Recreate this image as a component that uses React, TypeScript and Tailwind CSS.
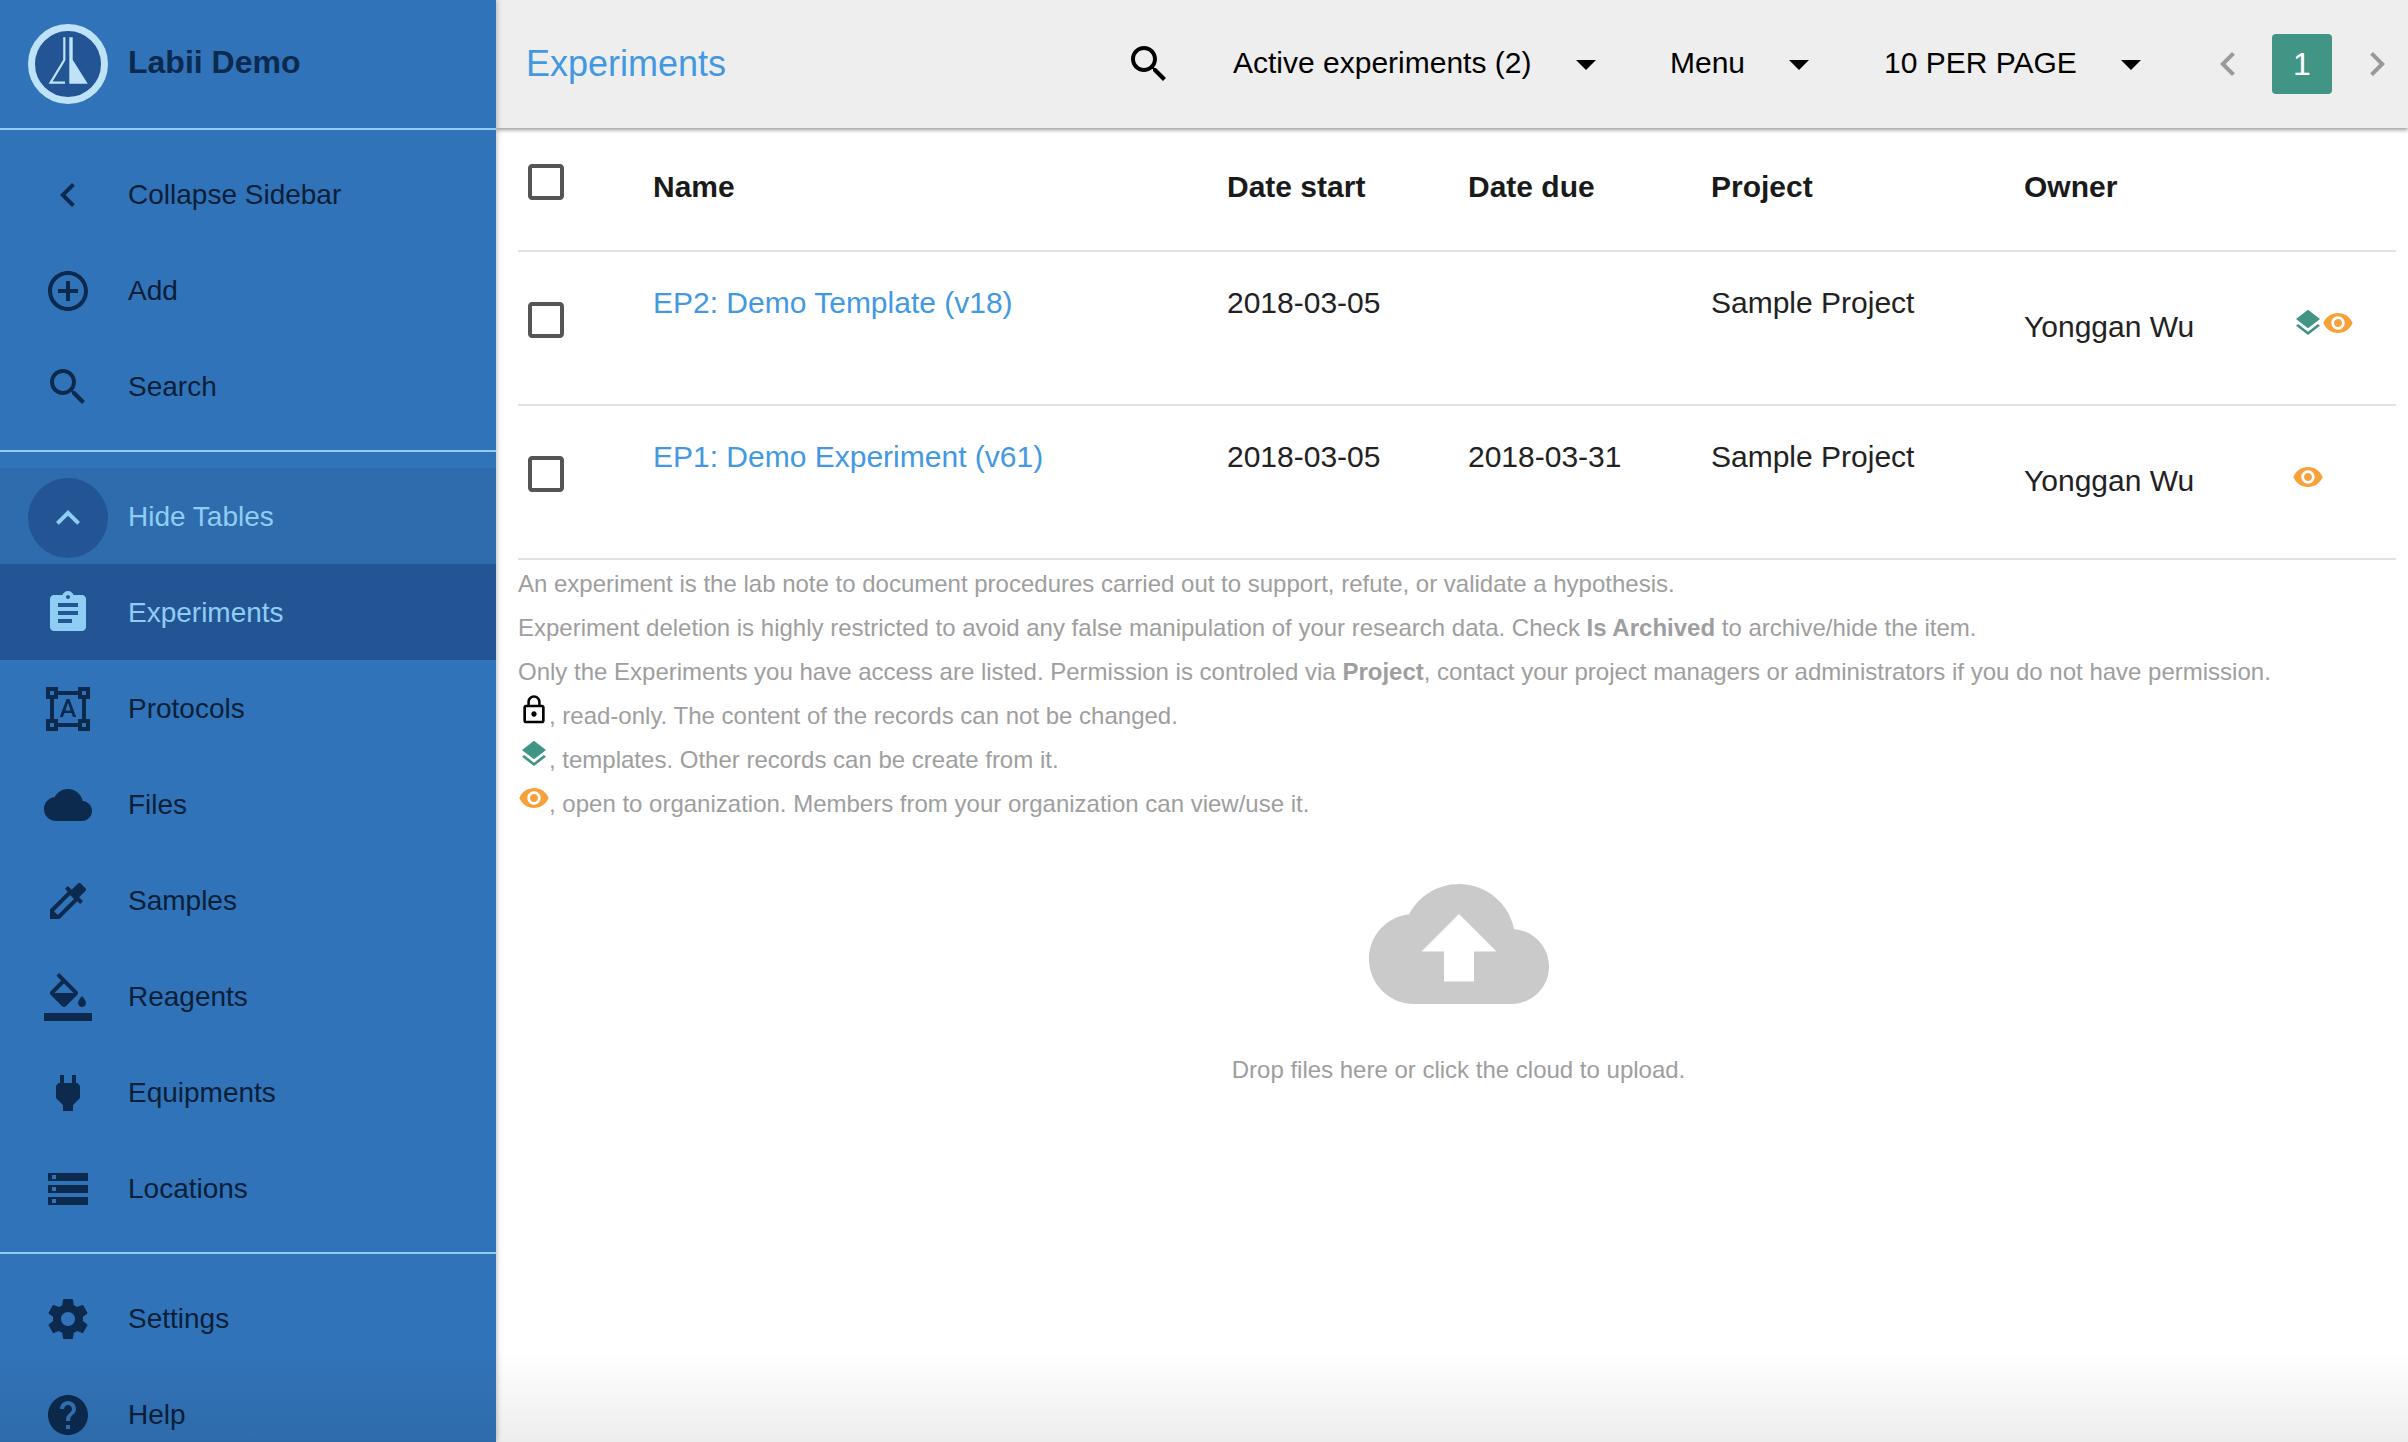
const P = {
  chevronLeft: "M15.41 7.41L14 6l-6 6 6 6 1.41-1.41L10.83 12z",
  chevronRight: "M10 6L8.59 7.41 13.17 12l-4.58 4.59L10 18l6-6z",
  add: "M13 7h-2v4H7v2h4v4h2v-4h4v-2h-4V7zm-1-5C6.48 2 2 6.48 2 12s4.48 10 10 10 10-4.48 10-10S17.52 2 12 2zm0 18c-4.41 0-8-3.59-8-8s3.59-8 8-8 8 3.59 8 8-3.59 8-8 8z",
  search: "M15.5 14h-.79l-.28-.27C15.41 12.59 16 11.11 16 9.5 16 5.91 13.09 3 9.5 3S3 5.91 3 9.5 5.91 16 9.5 16c1.61 0 3.09-.59 4.23-1.57l.27.28v.79l5 4.99L20.49 19l-4.99-5zm-6 0C7.01 14 5 11.99 5 9.5S7.01 5 9.5 5 14 7.01 14 9.5 11.99 14 9.5 14z",
  expandLess: "M12 8l-6 6 1.41 1.41L12 10.83l4.59 4.58L18 14z",
  assignment: "M19 3h-4.18C14.4 1.84 13.3 1 12 1c-1.3 0-2.4.84-2.82 2H5c-1.1 0-2 .9-2 2v14c0 1.1.9 2 2 2h14c1.1 0 2-.9 2-2V5c0-1.1-.9-2-2-2zm-7 0c.55 0 1 .45 1 1s-.45 1-1 1-1-.45-1-1 .45-1 1-1zm2 14H7v-2h7v2zm3-4H7v-2h10v2zm0-4H7V7h10v2z",
  shapes: "M23 7V1h-6v2H7V1H1v6h2v10H1v6h6v-2h10v2h6v-6h-2V7h2zM3 3h2v2H3V3zm2 18H3v-2h2v2zm12-2H7v-2H5V7h2V5h10v2h2v10h-2v2zm4 2h-2v-2h2v2zM19 5V3h2v2h-2zm-5.27 9h-3.49l-.73 2H7.89l3.4-9h1.4l3.41 9h-1.63l-.74-2zm-3.04-1.26h2.61L12 8.91l-1.31 3.83z",
  cloud: "M19.35 10.04C18.67 6.59 15.64 4 12 4 9.11 4 6.6 5.64 5.35 8.04 2.34 8.36 0 10.91 0 14c0 3.31 2.69 6 6 6h13c2.76 0 5-2.24 5-5 0-2.64-2.05-4.78-4.65-4.96z",
  cloudUpload: "M19.35 10.04C18.67 6.59 15.64 4 12 4 9.11 4 6.6 5.64 5.35 8.04 2.34 8.36 0 10.91 0 14c0 3.31 2.69 6 6 6h13c2.76 0 5-2.24 5-5 0-2.64-2.05-4.78-4.65-4.96zM14 13v4h-4v-4H7l5-5 5 5h-3z",
  colorize: "M20.71 5.63l-2.34-2.34c-.39-.39-1.02-.39-1.41 0l-3.12 3.12-1.93-1.91-1.41 1.41 1.42 1.42L3 16.25V21h4.75l8.92-8.92 1.42 1.42 1.41-1.41-1.92-1.92 3.12-3.12c.4-.4.4-1.03.01-1.42zM6.92 19L5 17.08l8.06-8.06 1.92 1.92L6.92 19z",
  fill: "M16.56 8.94L7.62 0 6.21 1.41l2.38 2.38-5.15 5.15c-.59.59-.59 1.54 0 2.12l5.5 5.5c.29.29.68.44 1.06.44s.77-.15 1.06-.44l5.5-5.5c.59-.58.59-1.53 0-2.12zM5.21 10L10 5.21 14.79 10H5.21zM19 11.5s-2 2.17-2 3.5c0 1.1.9 2 2 2s2-.9 2-2c0-1.33-2-3.5-2-3.5zM0 20h24v4H0z",
  power: "M16.01 7L16 3h-2v4h-4V3H8v4h-.01C7 6.99 6 7.99 6 8.99v5.49L9.5 18v3h5v-3l3.5-3.51v-5.5c0-1-1-2-1.99-1.99z",
  storage: "M2 20h20v-4H2v4zm2-3h2v2H4v-2zM2 4v4h20V4H2zm4 3H4V5h2v2zm-4 7h20v-4H2v4zm2-3h2v2H4v-2z",
  settings: "M19.43 12.98c.04-.32.07-.64.07-.98s-.03-.66-.07-.98l2.11-1.65c.19-.15.24-.42.12-.64l-2-3.46c-.12-.22-.39-.3-.61-.22l-2.49 1c-.52-.4-1.08-.73-1.69-.98l-.38-2.65C14.46 2.18 14.25 2 14 2h-4c-.25 0-.46.18-.49.42l-.38 2.65c-.61.25-1.17.59-1.69.98l-2.49-1c-.23-.09-.49 0-.61.22l-2 3.46c-.13.22-.07.49.12.64l2.11 1.65c-.04.32-.07.65-.07.98s.03.66.07.98l-2.11 1.65c-.19.15-.24.42-.12.64l2 3.46c.12.22.39.3.61.22l2.49-1c.52.4 1.08.73 1.69.98l.38 2.65c.03.24.24.42.49.42h4c.25 0 .46-.18.49-.42l.38-2.65c.61-.25 1.17-.59 1.69-.98l2.49 1c.23.09.49 0 .61-.22l2-3.46c.12-.22.07-.49-.12-.64l-2.11-1.65zM12 15.5c-1.93 0-3.5-1.57-3.5-3.5s1.57-3.5 3.5-3.5 3.5 1.57 3.5 3.5-1.57 3.5-3.5 3.5z",
  help: "M12 2C6.48 2 2 6.48 2 12s4.48 10 10 10 10-4.48 10-10S17.52 2 12 2zm1 17h-2v-2h2v2zm2.07-7.75l-.9.92C13.45 12.9 13 13.5 13 15h-2v-.5c0-1.1.45-2.1 1.17-2.83l1.24-1.26c.37-.36.59-.86.59-1.41 0-1.1-.9-2-2-2s-2 .9-2 2H8c0-2.21 1.79-4 4-4s4 1.79 4 4c0 .88-.36 1.68-.93 2.25z",
  layers: "M11.99 18.54l-7.37-5.73L3 14.07l9 7 9-7-1.63-1.27-7.38 5.74zM12 16l7.36-5.73L21 9l-9-7-9 7 1.63 1.27L12 16z",
  eye: "M12 4.5C7 4.5 2.73 7.61 1 12c1.73 4.39 6 7.5 11 7.5s9.27-3.11 11-7.5c-1.73-4.39-6-7.5-11-7.5zM12 17c-2.76 0-5-2.24-5-5s2.24-5 5-5 5 2.24 5 5-2.24 5-5 5zm0-8c-1.66 0-3 1.34-3 3s1.34 3 3 3 3-1.34 3-3-1.34-3-3-3z",
  lock: "M12 17c1.1 0 2-.9 2-2s-.9-2-2-2-2 .9-2 2 .9 2 2 2zm6-9h-1V6c0-2.76-2.24-5-5-5S7 3.24 7 6v2H6c-1.1 0-2 .9-2 2v10c0 1.1.9 2 2 2h12c1.1 0 2-.9 2-2V10c0-1.1-.9-2-2-2zM8.9 6c0-1.71 1.39-3.1 3.1-3.1s3.1 1.39 3.1 3.1v2H8.9V6zM18 20H6V10h12v10z",
  drop: "M7 10l5 5 5-5z",
  checkbox: "M19 5v14H5V5h14m0-2H5c-1.1 0-2 .9-2 2v14c0 1.1.9 2 2 2h14c1.1 0 2-.9 2-2V5c0-1.1-.9-2-2-2z",
};

const Icon = ({ d, className }: { d: string; className: string }) => (
  <svg viewBox="0 0 24 24" fill="currentColor" className={`shrink-0 ${className}`}>
    <path d={d} />
  </svg>
);

const NavItem = ({ icon, label }: { icon: string; label: string }) => (
  <div className="flex h-24 items-center pt-[2px] pl-[44px] text-[#0c2a4e]">
    <Icon d={icon} className="size-12" />
    <span className="ml-[36px] text-[28px] text-[#0a2038]">{label}</span>
  </div>
);

const Logo = () => (
  <div className="flex size-[80px] items-center justify-center rounded-full border-[7px] border-[#bee3f8] bg-[#235595]">
    <svg viewBox="0 0 66 66" className="size-[66px]">
      <path d="M29.3 6.3V29L15.6 51.7H30" fill="none" stroke="#bee3f8" strokeWidth="2.2" />
      <path d="M34.3 6.3h3.4V28.7l15 24H34.3z" fill="#bee3f8" />
    </svg>
  </div>
);

const Sidebar = () => (
  <aside className="relative z-20 flex h-full w-[496px] shrink-0 flex-col overflow-hidden bg-[#3173b8] shadow-[0_0_6px_rgba(0,0,0,0.35)]">
    <div className="flex h-[128px] shrink-0 items-center pl-[28px]">
      <Logo />
      <span className="mb-[4px] ml-[20px] text-[32px] font-bold text-[#0c2a4e]">Labii Demo</span>
    </div>
    <div className="h-0.5 shrink-0 bg-[#90cdf4]" />
    <div className="shrink-0 pt-4 pb-4">
      <NavItem icon={P.chevronLeft} label="Collapse Sidebar" />
      <NavItem icon={P.add} label="Add" />
      <NavItem icon={P.search} label="Search" />
    </div>
    <div className="h-0.5 shrink-0 bg-[#90cdf4]" />
    <div className="shrink-0 pt-4 pb-4">
      <div className="flex h-24 items-center bg-[#2e6cae] pt-[2px] pl-[28px] text-[#90cdf4]">
        <div className="mt-[2px] flex size-20 items-center justify-center rounded-full bg-[#235595]">
          <Icon d={P.expandLess} className="size-12" />
        </div>
        <span className="ml-[20px] text-[28px]">Hide Tables</span>
      </div>
      <div className="flex h-24 items-center bg-[#235595] pt-[2px] pl-[44px] text-[#90cdf4]">
        <Icon d={P.assignment} className="size-12" />
        <span className="ml-[36px] text-[28px]">Experiments</span>
      </div>
      <NavItem icon={P.shapes} label="Protocols" />
      <NavItem icon={P.cloud} label="Files" />
      <NavItem icon={P.colorize} label="Samples" />
      <NavItem icon={P.fill} label="Reagents" />
      <NavItem icon={P.power} label="Equipments" />
      <NavItem icon={P.storage} label="Locations" />
    </div>
    <div className="h-0.5 shrink-0 bg-[#90cdf4]" />
    <div className="shrink-0 pt-4">
      <NavItem icon={P.settings} label="Settings" />
      <NavItem icon={P.help} label="Help" />
    </div>
  </aside>
);

const Select = ({ label, textWidth }: { label: string; textWidth: string }) => (
  <div className="flex items-center">
    <span className={`mb-[3px] text-[30px] text-black ${textWidth}`}>{label}</span>
    <Icon d={P.drop} className="size-12 text-black" />
  </div>
);

const Topbar = () => (
  <header className="relative z-10 flex h-[128px] shrink-0 items-center bg-[#eeeeee] pl-[30px] shadow-[0_2px_4px_rgba(0,0,0,0.4)]">
    <h1 className="w-[599px] text-[36px] text-[#4299e1]">Experiments</h1>
    <Icon d={P.search} className="size-12 text-black" />
    <div className="ml-[60px]">
      <Select label="Active experiments (2)" textWidth="w-[329px]" />
    </div>
    <div className="ml-[60px]">
      <Select label="Menu" textWidth="w-[105px]" />
    </div>
    <div className="ml-[61px]">
      <Select label="10 PER PAGE" textWidth="w-[223px]" />
    </div>
    <Icon d={P.chevronLeft} className="ml-[49px] size-12 text-[#999999]" />
    <div className="ml-[20px] flex size-[60px] items-center justify-center rounded bg-[#419585] text-[32px] text-white">1</div>
    <Icon d={P.chevronRight} className="ml-[21px] size-12 text-[#999999]" />
  </header>
);

const columns = "grid grid-cols-[135px_574px_241px_243px_313px_270px_1fr]";

const Row = ({ name, start, due, template }: { name: string; start: string; due: string; template?: boolean }) => (
  <div className={`${columns} h-[154px] border-b-2 border-[#e2e2e2] text-[30px] leading-[40px] text-[#222222]`}>
    <Icon d={P.checkbox} className="mt-[44px] ml-[4px] size-12 text-[#555555]" />
    <a className="mt-[31px] text-[#4299e1]">{name}</a>
    <div className="mt-[31px]">{start}</div>
    <div className="mt-[31px]">{due}</div>
    <div className="mt-[31px]">Sample Project</div>
    <div className="mt-[55px]">Yonggan Wu</div>
    <div className="mt-[55px] flex">
      {template && <Icon d={P.layers} className="mr-[-2px] -ml-[2px] size-8 text-[#419585]" />}
      <Icon d={P.eye} className={`size-8 text-[#f6a13a] ${template ? "" : "-ml-[2px]"}`} />
    </div>
  </div>
);

const Note = ({ children }: { children: React.ReactNode }) => (
  <div className="flex h-[44px] items-start leading-[44px]">{children}</div>
);

const Notes = () => (
  <div className="pt-[2px] text-[24px] text-[#9e9e9e]">
    <Note>An experiment is the lab note to document procedures carried out to support, refute, or validate a hypothesis.</Note>
    <Note>
      <span className="whitespace-pre">
        Experiment deletion is highly restricted to avoid any false manipulation of your research data. Check <b>Is Archived</b> to archive/hide the item.
      </span>
    </Note>
    <Note>
      <span className="whitespace-pre">
        Only the Experiments you have access are listed. Permission is controled via <b>Project</b>, contact your project managers or administrators if you do not have permission.
      </span>
    </Note>
    <Note>
      <Icon d={P.lock} className="-mr-[1px] size-8 text-black" />
      <span>, read-only. The content of the records can not be changed.</span>
    </Note>
    <Note>
      <Icon d={P.layers} className="-mr-[1px] size-8 text-[#419585]" />
      <span>, templates. Other records can be create from it.</span>
    </Note>
    <Note>
      <Icon d={P.eye} className="-mr-[1px] size-8 text-[#f6a13a]" />
      <span>, open to organization. Members from your organization can view/use it.</span>
    </Note>
  </div>
);

export default function App() {
  return (
    <div className="relative flex h-[1442px] w-[2408px] overflow-hidden bg-white font-['Liberation_Sans',Arial,sans-serif]">
      <Sidebar />
      <main className="flex min-w-0 flex-1 flex-col">
        <Topbar />
        <div className="pr-[12px] pl-[22px]">
          <div className={`${columns} h-[124px] items-start border-b-2 border-[#e2e2e2] text-[30px] leading-[40px] font-bold text-[#1a1a1a]`}>
            <Icon d={P.checkbox} className="mt-[30px] ml-[4px] size-12 font-normal text-[#555555]" />
            <div className="mt-[39px]">Name</div>
            <div className="mt-[39px]">Date start</div>
            <div className="mt-[39px]">Date due</div>
            <div className="mt-[39px]">Project</div>
            <div className="mt-[39px]">Owner</div>
          </div>
          <Row name="EP2: Demo Template (v18)" start="2018-03-05" due="" template />
          <Row name="EP1: Demo Experiment (v61)" start="2018-03-05" due="2018-03-31" />
          <Notes />
          <div className="flex flex-col items-center pt-[28px] pl-[3px]">
            <Icon d={P.cloudUpload} className="size-[180px] text-[#cacaca]" />
            <p className="mt-[18px] text-[24px] leading-[36px] text-[#9e9e9e]">Drop files here or click the cloud to upload.</p>
          </div>
        </div>
      </main>
      {/* fade at the bottom edge of the page */}
      <div className="pointer-events-none absolute right-0 bottom-0 left-0 z-30 h-[90px] bg-gradient-to-b from-transparent to-[rgba(0,0,0,0.07)]" />
    </div>
  );
}
